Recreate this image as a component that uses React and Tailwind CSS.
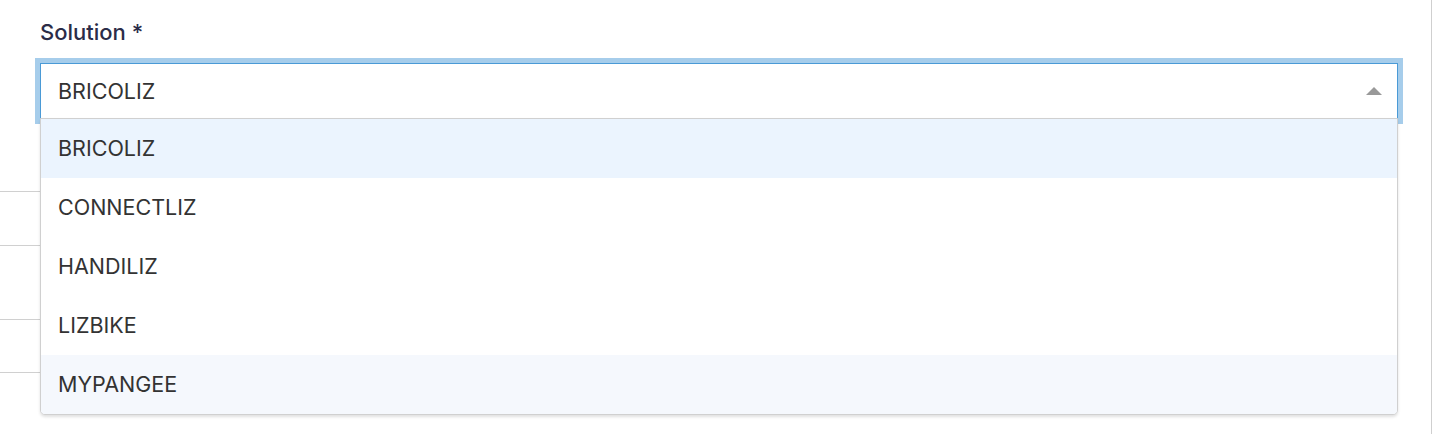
const options = ["BRICOLIZ", "CONNECTLIZ", "HANDILIZ", "LIZBIKE", "MYPANGEE"];

const rowBg = (i) => {
  if (i === 0) return "bg-[#ebf4fe]";
  if (i === options.length - 1) return "bg-[#f5f8fd]";
  return "bg-white";
};

export default function App() {
  return (
    <div className="w-[1456px] h-[434px] bg-white overflow-hidden flex font-['Inter',sans-serif]">
      <div className="w-[1432px] h-full border-r border-[#cfcfcf] relative">
        <div className="pl-10 pr-[33px] pt-[18px] relative z-10">
          <label className="block text-[22px] font-medium leading-[28px] text-[#2b2c48]">Solution *</label>
          <div className="relative mt-[17px]">
            <div className="h-[56px] bg-white border border-[#4a9ad6] shadow-[0_0_0_5px_#a6cdeb] flex items-center justify-between pl-[17px] pr-[15px]">
              <span className="text-[21.5px] text-[#333]">BRICOLIZ</span>
              <span className="w-0 h-0 border-l-[8px] border-r-[8px] border-b-[8px] border-l-transparent border-r-transparent border-b-[#999]" />
            </div>
            <ul className="absolute left-0 right-0 top-[55px] bg-white border border-[#d0d0d0] rounded-b-[5px] shadow-[0_2px_3px_rgba(0,0,0,0.12)] overflow-hidden">
              {options.map((o, i) => (
                <li
                  key={o}
                  className={`h-[59px] flex items-center pl-[17px] text-[21.5px] text-[#333] ${rowBg(i)}`}
                >
                  {o}
                </li>
              ))}
            </ul>
          </div>
        </div>
        <div className="w-10">
          <div className="h-[73px] border-b border-[#d0d0d0]" />
          <div className="h-[54px] border-b border-[#d0d0d0]" />
          <div className="h-[74px] border-b border-[#d0d0d0]" />
          <div className="h-[53px] border-b border-[#d0d0d0]" />
        </div>
      </div>
    </div>
  );
}
